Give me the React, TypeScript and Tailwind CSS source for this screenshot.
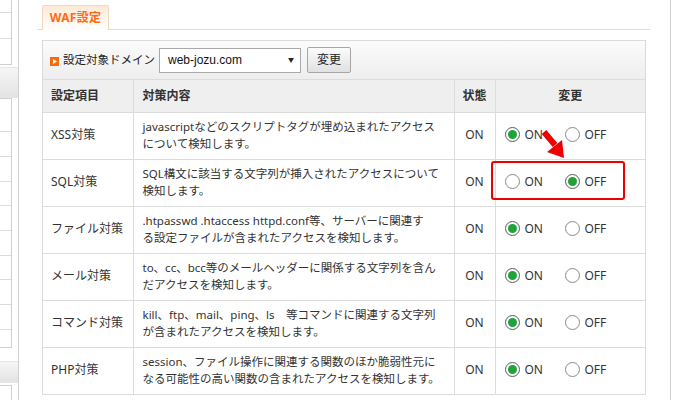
import React from "react";

type Row = { label: string; lines: [string, string]; on: boolean };

const rows: Row[] = [
  { label: "XSS対策", lines: ["javascriptなどのスクリプトタグが埋め込まれたアクセス", "について検知します。"], on: true },
  { label: "SQL対策", lines: ["SQL構文に該当する文字列が挿入されたアクセスについて", "検知します。"], on: false },
  { label: "ファイル対策", lines: [".htpasswd .htaccess httpd.conf等、サーバーに関連す", "る設定ファイルが含まれたアクセスを検知します。"], on: true },
  { label: "メール対策", lines: ["to、cc、bcc等のメールヘッダーに関係する文字列を含ん", "だアクセスを検知します。"], on: true },
  { label: "コマンド対策", lines: ["kill、ftp、mail、ping、ls　等コマンドに関連する文字列", "が含まれたアクセスを検知します。"], on: true },
  { label: "PHP対策", lines: ["session、ファイル操作に関連する関数のほか脆弱性元に", "なる可能性の高い関数の含まれたアクセスを検知します。"], on: true },
];

function Radio({ checked }: { checked: boolean }) {
  return (
    <span
      className={`w-[15px] h-[15px] rounded-full border flex items-center justify-center bg-white ${
        checked ? "border-[#5a5a5a]" : "border-[#8a8a8a]"
      }`}
    >
      {checked && <span className="w-[9px] h-[9px] rounded-full bg-[#1fa33a]" />}
    </span>
  );
}

function Sidebar() {
  return (
    <div className="w-[19px] shrink-0 border-r border-[#d0d0d0] flex flex-col bg-white">
      <div className="w-[12px] h-[65px] border-r border-b border-[#cfcfcf] flex flex-col">
        <div className="h-[13px] border-b border-[#dcdcdc]" />
        <div className="h-[26px] border-b border-[#dcdcdc]" />
      </div>
      <div className="mt-[2px] h-[31px] bg-gradient-to-b from-[#f6f6f6] to-[#e3e3e3] border-y border-[#e6e6e6]" />
      <div className="w-[12px] h-[250px] border-r border-t border-b border-[#cfcfcf] flex flex-col">
        <div className="h-[33px] border-b border-[#dcdcdc]" />
        <div className="h-[25px] border-b border-[#dcdcdc]" />
        <div className="h-[25px] border-b border-[#dcdcdc]" />
        <div className="h-[24px] border-b border-[#dcdcdc]" />
        <div className="h-[25px] border-b border-[#dcdcdc]" />
        <div className="h-[25px] border-b border-[#dcdcdc]" />
        <div className="h-[24px] border-b border-[#dcdcdc]" />
        <div className="h-[25px] border-b border-[#dcdcdc]" />
        <div className="h-[25px] border-b border-[#dcdcdc]" />
      </div>
      <div className="mt-[13px] h-[22px] bg-gradient-to-b from-[#f6f6f6] to-[#e3e3e3] border-y border-[#e6e6e6]" />
      <div className="mt-[2px] w-[12px] flex-1 border-r border-t border-[#cfcfcf]" />
    </div>
  );
}

export default function App() {
  return (
    <div className="relative w-[680px] h-[400px] overflow-hidden bg-white flex text-[#333] font-['Noto_Sans','Noto_Sans_CJK_JP',sans-serif]">
      <Sidebar />
      <div className="w-[18px] shrink-0" />
      <div className="w-[613px] shrink-0 flex flex-col">
        <div className="h-[30px] border-b border-[#dddddd] flex items-end pl-[5px]">
          <div className="w-[67px] h-[25px] -mb-px border border-b-0 border-[#f0d8c0] rounded-t-[2px] bg-gradient-to-b from-[#fde9d6] to-white flex items-center justify-center">
            <span className="text-[12px] font-bold text-[#ff6a10] tracking-[0.3px]">WAF設定</span>
          </div>
        </div>
        <div className="ml-[5px] mt-[10px] w-[604px] border border-[#dadada] flex flex-col">
          <div className="h-[39px] px-[7px] flex items-center bg-gradient-to-b from-[#fbfbfb] to-[#eeeeee] border-b border-[#dcdcdc]">
            <svg width="9" height="9" viewBox="0 0 9 9" className="mr-[4px] mt-[2px]">
              <rect width="9" height="9" fill="#f76b0d" />
              <path d="M3 2 L7 4.5 L3 7 Z" fill="#ffffff" />
            </svg>
            <span className="text-[11.5px] text-[#222]">設定対象ドメイン</span>
            <div className="ml-[4px] w-[142px] h-[25px] border border-[#a9a9a9] bg-white flex items-center pl-[8px] pr-[6px]">
              <span className="flex-1 text-[12px] text-[#111] font-['Liberation_Sans',sans-serif]">web-jozu.com</span>
              <span className="text-[6px] text-[#222]">▼</span>
            </div>
            <div className="ml-[6px] w-[44px] h-[26px] border border-[#a6a6a6] rounded-[2px] bg-gradient-to-b from-[#fbfbfb] to-[#e1e1e1] flex items-center justify-center">
              <span className="text-[12px] text-[#222]">変更</span>
            </div>
          </div>
          <table className="table-fixed border-collapse w-full text-[11.5px]">
            <colgroup>
              <col className="w-[90px]" />
              <col className="w-[321px]" />
              <col className="w-[41px]" />
              <col />
            </colgroup>
            <thead>
              <tr className="h-[32px] bg-[#efefef]">
                <th className="border-r border-b border-[#dcdcdc] text-left pl-[8px] font-bold text-[12px]">設定項目</th>
                <th className="border-r border-b border-[#dcdcdc] text-left pl-[9px] font-bold text-[12px]">対策内容</th>
                <th className="border-r border-b border-[#dcdcdc] text-center font-bold text-[12px]">状態</th>
                <th className="border-b border-[#dcdcdc] text-center font-bold text-[12px]">変更</th>
              </tr>
            </thead>
            <tbody>
              {rows.map((r, i) => (
                <tr key={i} className="h-[47px]">
                  <td className={`border-r border-[#dcdcdc] pl-[8px] pb-[2px] whitespace-nowrap text-[12px] ${i < rows.length - 1 ? "border-b" : ""}`}>{r.label}</td>
                  <td className={`border-r border-[#dcdcdc] pl-[9px] pb-[2px] whitespace-nowrap leading-[17px] ${i < rows.length - 1 ? "border-b" : ""}`}>
                    {r.lines[0]}
                    <br />
                    {r.lines[1]}
                  </td>
                  <td className={`border-r border-[#dcdcdc] text-center pb-[2px] text-[12px] ${i < rows.length - 1 ? "border-b" : ""}`}>ON</td>
                  <td className={`border-[#dcdcdc] pb-[2px] text-[12px] ${i < rows.length - 1 ? "border-b" : ""}`}>
                    <div className="flex items-center pl-[9px]">
                      <Radio checked={r.on} />
                      <span className="ml-[5px] w-[40px]">ON</span>
                      <Radio checked={!r.on} />
                      <span className="ml-[5px]">OFF</span>
                    </div>
                  </td>
                </tr>
              ))}
            </tbody>
          </table>
        </div>
      </div>
      <div className="w-[20px] shrink-0" />
      <div className="w-[1px] shrink-0 bg-[#d0d0d0]" />
      <div className="flex-1" />

      <div className="absolute left-[491px] top-[161px] w-[134px] h-[39px] border-2 border-[#ee0000] rounded-[3px]" />
      <svg className="absolute left-[538px] top-[127px]" width="32" height="34" viewBox="0 0 32 34">
        <line x1="6" y1="5" x2="17" y2="18" stroke="#ee0000" strokeWidth="6" />
        <polygon points="26,31 9,25 24,13" fill="#ee0000" />
      </svg>
    </div>
  );
}
